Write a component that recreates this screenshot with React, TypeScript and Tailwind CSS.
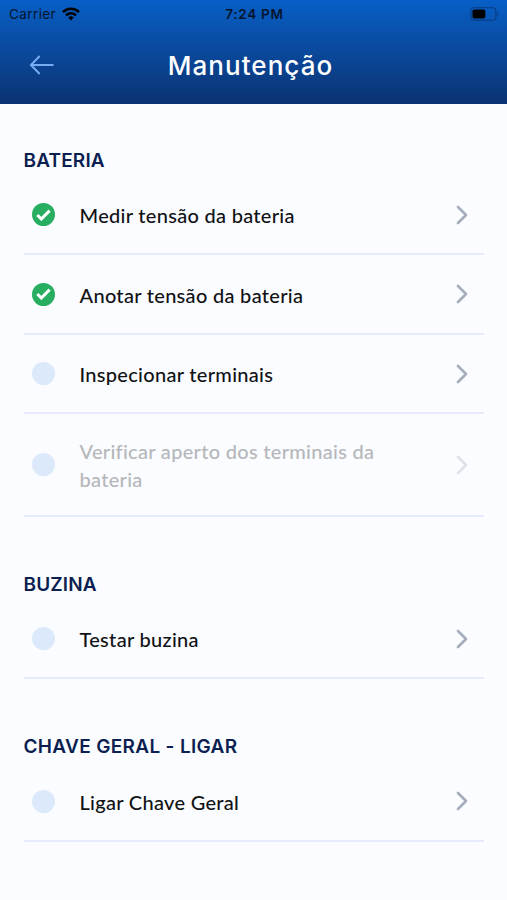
import clsx from "clsx";
import { ChevronRight } from "lucide-react";

type Task = { title: string; done?: boolean; disabled?: boolean };
type Section = { title: string; tracking: string; tasks: Task[] };

const sections: Section[] = [
  {
    title: "BATERIA",
    tracking: "tracking-[0.15px]",
    tasks: [
      { title: "Medir tensão da bateria", done: true },
      { title: "Anotar tensão da bateria", done: true },
      { title: "Inspecionar terminais" },
      { title: "Verificar aperto dos terminais da bateria", disabled: true },
    ],
  },
  { title: "BUZINA", tracking: "tracking-[0.15px]", tasks: [{ title: "Testar buzina" }] },
  { title: "CHAVE GERAL - LIGAR", tracking: "tracking-[0.33px]", tasks: [{ title: "Ligar Chave Geral" }] },
];

function StatusBar() {
  return (
    <div className="grid h-7 grid-cols-3 items-center pr-[7px] pl-[9px] font-['Inter',sans-serif] text-[13.5px] text-[#04152f]">
      <div className="flex items-center gap-[6px]">
        <span className="tracking-[0.4px]">Carrier</span>
        <svg width="18" height="14" viewBox="0 0 18 14" fill="none" stroke="#000" strokeWidth="2.5">
          <path d="M1 5.1a11.4 11.4 0 0 1 16 0" />
          <path d="M4 8.3a7.2 7.2 0 0 1 10 0" />
          <path d="M6.2 10.6a4 4 0 0 1 5.6 0L9 13.4z" fill="#000" stroke="none" />
        </svg>
      </div>
      <span className="text-center font-semibold tracking-[0.7px] whitespace-nowrap">7:24 PM</span>
      <svg className="justify-self-end" width="30" height="14" viewBox="0 0 30 14" fill="none">
        <rect x="0.9" y="0.8" width="25" height="12.4" rx="3.4" stroke="#063b80" strokeWidth="1.1" />
        <rect x="2.5" y="2.4" width="12.8" height="9.2" rx="1.8" fill="#000" />
        <path d="M27.5 4.8c1.7.7 1.7 3.7 0 4.4z" fill="#063b80" />
      </svg>
    </div>
  );
}

function Header() {
  return (
    <header className="h-[103.5px] bg-linear-to-b from-[#075fc7] to-[#0a3372]">
      <StatusBar />
      <div className="grid h-[74px] grid-cols-[80px_1fr_86px] items-center">
        <svg className="mb-px ml-[29px]" width="26" height="20" viewBox="0 0 26 20" fill="none" stroke="#75acf2" strokeWidth="2">
          <path d="M24.5 10H2M10.7 1 1.9 10l8.8 9" />
        </svg>
        <h1 className="text-center font-['Inter',sans-serif] text-[26px] font-medium tracking-[1.05px] whitespace-nowrap text-white">
          Manutenção
        </h1>
      </div>
    </header>
  );
}

function Status({ done }: { done?: boolean }) {
  return (
    <span className={clsx("flex size-[23px] shrink-0 items-center justify-center rounded-full", done ? "bg-[#27ae60]" : "bg-[#dce9fa]")}>
      {done && (
        <svg width="15" height="12" viewBox="0 0 15 12" fill="none" stroke="#fff" strokeWidth="3">
          <path d="m1.3 6 4 4 8.3-8.4" />
        </svg>
      )}
    </span>
  );
}

function TaskRow({ task }: { task: Task }) {
  return (
    <li className="flex min-h-[79.5px] items-center border-b-2 border-[#e4ebfb] pt-[22.5px] pr-[10px] pb-[22px] pl-2">
      <Status done={task.done} />
      <span
        className={clsx(
          "ml-[25px] w-[310px] font-['Lato',sans-serif] text-[20px] leading-7 font-medium tracking-[0.3px]",
          task.disabled ? "text-[#b5b7ba]" : "pt-px text-[#111214]",
        )}
      >
        {task.title}
      </span>
      <ChevronRight
        className={clsx("-mr-[4px] ml-auto size-8 shrink-0", task.disabled ? "text-[#dfe2e8]" : "text-[#a6adbd]")}
        strokeWidth={2}
      />
    </li>
  );
}

export default function App() {
  return (
    <div className="min-h-[900px] bg-[#fafcff]">
      <Header />
      <main className="flex flex-col gap-[53px] px-[23.5px] pt-[42.4px]">
        {sections.map((section) => (
          <section key={section.title}>
            <h2 className={clsx("h-[30px] font-['Inter',sans-serif] text-[19px] leading-[30px] font-semibold text-[#0b1f50]", section.tracking)}>
              {section.title}
            </h2>
            <ul>
              {section.tasks.map((task) => (
                <TaskRow key={task.title} task={task} />
              ))}
            </ul>
          </section>
        ))}
      </main>
    </div>
  );
}
